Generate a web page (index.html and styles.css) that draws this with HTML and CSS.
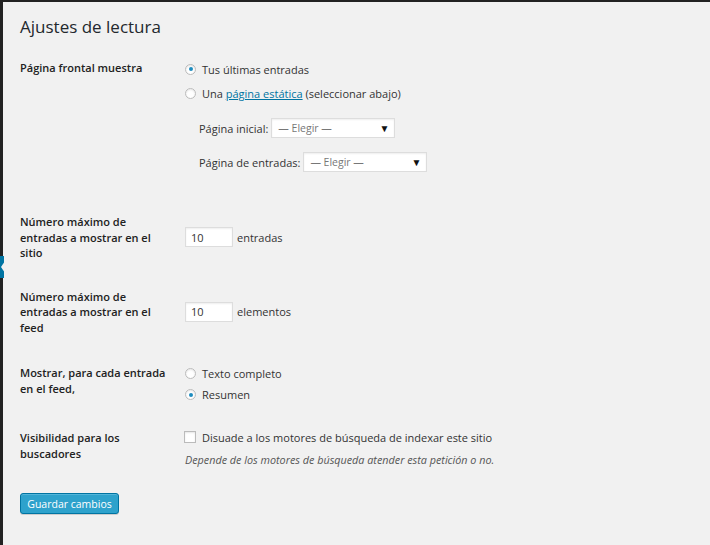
FILE: index.html
```html
<!DOCTYPE html>
<html lang="es">
<head>
<meta charset="utf-8">
<title>Ajustes de lectura</title>
<link rel="stylesheet" href="styles.css">
</head>
<body>
<div class="frame">
  <div class="menu-edge"><span class="current"></span></div>
  <div class="wrap">
    <h1 class="title">Ajustes de lectura</h1>
    <div class="form-table">
      <div class="row row-front">
        <div class="th">Página frontal muestra</div>
        <div class="td">
          <div class="choice tall"><span class="radio checked"></span>Tus últimas entradas</div>
          <div class="choice tall"><span class="radio"></span>Una&nbsp;<a class="link" href="#">página estática</a>&nbsp;(seleccionar abajo)</div>
          <div class="sub-list">
            <div class="sub-item">Página inicial: <span class="select w124"><span class="sel-text">— Elegir —</span><span class="arrow">▼</span></span></div>
            <div class="sub-item">Página de entradas: <span class="select w124"><span class="sel-text">— Elegir —</span><span class="arrow">▼</span></span></div>
          </div>
        </div>
      </div>
      <div class="row">
        <div class="th">Número máximo de entradas a mostrar en el sitio</div>
        <div class="td"><div class="inline"><span class="num">10</span>entradas</div></div>
      </div>
      <div class="row">
        <div class="th">Número máximo de entradas a mostrar en el feed</div>
        <div class="td"><div class="inline"><span class="num">10</span>elementos</div></div>
      </div>
      <div class="row row-show">
        <div class="th">Mostrar, para cada entrada en el feed,</div>
        <div class="td">
          <div class="choice"><span class="radio"></span>Texto completo</div>
          <div class="choice"><span class="radio checked"></span>Resumen</div>
        </div>
      </div>
      <div class="row">
        <div class="th">Visibilidad para los buscadores</div>
        <div class="td">
          <div class="check-line"><span class="checkbox"></span>Disuade a los motores de búsqueda de indexar este sitio</div>
          <div class="desc">Depende de los motores de búsqueda atender esta petición o no.</div>
        </div>
      </div>
    </div>
    <div class="submit"><span class="button">Guardar cambios</span></div>
  </div>
</div>
</body>
</html>
```
FILE: styles.css
```css
html, body {
  margin: 0;
  padding: 0;
  background: #f1f1f1;
}
body {
  font-family: "Open Sans", "Noto Sans", sans-serif;
  font-size: 11px;
  color: #444;
}
.frame {
  display: flex;
  min-height: 545px;
  border-top: 2px solid #222;
  box-sizing: border-box;
}
.menu-edge {
  width: 3px;
  background: #222;
  position: relative;
  flex: none;
}
.menu-edge .current {
  position: absolute;
  left: 0;
  top: 254px;
  width: 4px;
  height: 22px;
  background: #0074a2;
}
.menu-edge .current::after {
  content: "";
  position: absolute;
  left: 1px;
  top: 5px;
  border-right: 4px solid #f1f1f1;
  border-top: 6px solid transparent;
  border-bottom: 6px solid transparent;
}
.wrap {
  flex: 1;
  padding-left: 17px;
}
.title {
  margin: 0;
  padding-top: 14px;
  height: 30px;
  font-size: 17px;
  line-height: 22px;
  font-weight: 400;
  color: #23282d;
}
.form-table {
  display: flex;
  flex-direction: column;
  gap: 22px;
  padding-top: 11px;
}
.row {
  display: grid;
  grid-template-columns: 165px 1fr;
}
.row-show {
  margin-top: 2px;
}
.row-show .td {
  padding-top: 1px;
}
.th {
  align-self: start;
  padding: 3px 15px 3px 0;
  font-weight: 600;
  color: #222;
  line-height: 15.5px;
}
.td {
  align-self: center;
  color: #333;
}
.row-front .td {
  padding-bottom: 17px;
}
.choice {
  display: flex;
  align-items: center;
  height: 21px;
}
.choice.tall {
  height: 24px;
}
.radio {
  box-sizing: border-box;
  width: 11px;
  height: 11px;
  border: 1px solid #bbb;
  border-radius: 50%;
  background: #fff;
  box-shadow: inset 0 1px 2px rgba(0,0,0,.1);
  margin: 0 6px 0 0;
  display: inline-flex;
  align-items: center;
  justify-content: center;
}
.radio.checked::after {
  content: "";
  width: 4px;
  height: 4px;
  border-radius: 50%;
  background: #1e8cbe;
}
.link {
  color: #0074a2;
  text-decoration: underline;
}
.sub-list {
  padding: 13px 0 0 14px;
  display: flex;
  flex-direction: column;
  gap: 14px;
}
.sub-item {
  display: flex;
  align-items: center;
  height: 20px;
}
.select {
  box-sizing: border-box;
  display: inline-flex;
  align-items: center;
  justify-content: space-between;
  height: 20px;
  margin-left: 3px;
  padding: 0 5px 0 6px;
  background: #fff;
  border: 1px solid #ddd;
  box-shadow: inset 0 1px 2px rgba(0,0,0,.07);
}
.w124 { width: 124px; }
.sel-text { color: #777; font-size: 10.5px; }
.arrow { color: #111; font-size: 10px; }
.inline {
  display: flex;
  align-items: center;
}
.num {
  box-sizing: border-box;
  width: 48px;
  height: 20px;
  display: inline-flex;
  align-items: center;
  padding-left: 5px;
  background: #fff;
  border: 1px solid #ddd;
  box-shadow: inset 0 1px 2px rgba(0,0,0,.07);
  margin-right: 4px;
  color: #333;
}
.check-line {
  display: flex;
  align-items: center;
  height: 20px;
}
.checkbox {
  box-sizing: border-box;
  width: 12px;
  height: 12px;
  border: 1px solid #bbb;
  background: #fff;
  box-shadow: inset 0 1px 2px rgba(0,0,0,.1);
  margin: 0 6px 0 -1px;
}
.desc {
  margin-top: 5px;
  font-style: italic;
  font-size: 10.8px;
  line-height: 16px;
  color: #555;
}
.submit {
  padding-top: 25px;
}
.button {
  box-sizing: border-box;
  display: inline-flex;
  align-items: center;
  justify-content: center;
  width: 99px;
  height: 21px;
  background: #2ea2cc;
  border: 1px solid #0074a2;
  border-radius: 3px;
  box-shadow: inset 0 1px 0 rgba(120,200,230,.5), 0 1px 0 rgba(0,0,0,.15);
  color: #fff;
  font-size: 10.5px;
}
```
